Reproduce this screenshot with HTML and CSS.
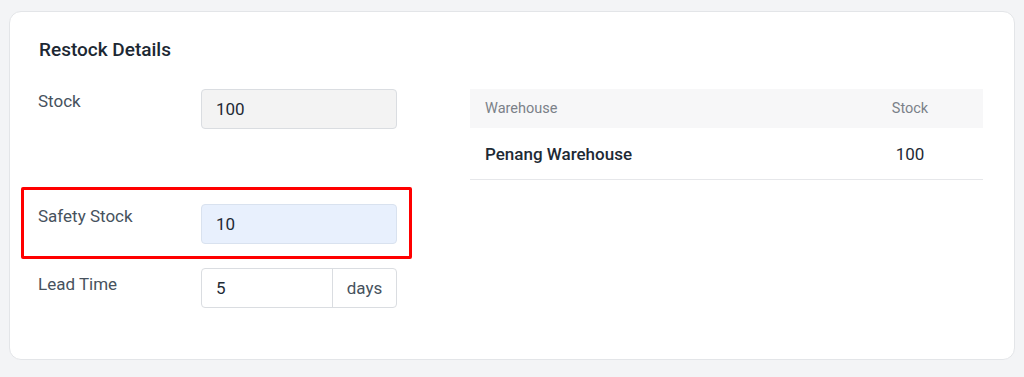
FILE: index.html
```html
<!DOCTYPE html>
<html lang="en">
<head>
    <meta charset="UTF-8">
    <meta name="viewport" content="width=device-width, initial-scale=1.0">
    <title>Restock Details</title>
    <link rel="stylesheet" href="styles.css">
</head>
<body>
    <div class="card">
        <h2 class="card-title">Restock Details</h2>
        <div class="card-body">
            <div class="form-col">
                <div class="form-row row-stock">
                    <label class="form-label">Stock</label>
                    <div class="input readonly">100</div>
                </div>
                <div class="form-row highlighted">
                    <label class="form-label">Safety Stock</label>
                    <div class="input focused">10</div>
                </div>
                <div class="form-row row-lead">
                    <label class="form-label">Lead Time</label>
                    <div class="input-group">
                        <div class="input grouped">5</div>
                        <span class="addon">days</span>
                    </div>
                </div>
            </div>
            <table class="stock-table">
                <thead>
                    <tr>
                        <th class="col-name">Warehouse</th>
                        <th class="col-qty">Stock</th>
                    </tr>
                </thead>
                <tbody>
                    <tr>
                        <td class="col-name">Penang Warehouse</td>
                        <td class="col-qty">100</td>
                    </tr>
                </tbody>
            </table>
        </div>
    </div>
</body>
</html>
```

FILE: styles.css
```css
body {
    font-family: Roboto, "Noto Sans", sans-serif;
    margin: 0;
    padding: 11px 9px 0 9px;
    background: #f3f4f6;
    color: #1e2a35;
}
.card {
    background: #fff;
    border: 1px solid #e3e5e8;
    border-radius: 12px;
    height: 349px;
    box-sizing: border-box;
    padding: 26px 31px 0 11px;
}
.card-title {
    margin: 0 0 27px 18px;
    font-size: 19px;
    font-weight: 500;
    line-height: 24px;
    color: #1c2833;
}
.card-body {
    display: flex;
    gap: 58px;
    align-items: flex-start;
}
.form-col {
    width: 391px;
    display: flex;
    flex-direction: column;
}
.form-row {
    display: flex;
    align-items: flex-start;
    padding: 0 15px 0 17px;
}
.row-stock {
    height: 98px;
}
.form-row.highlighted {
    border: 3px solid #ff0000;
    border-radius: 2px;
    padding: 14px 12px 12px 14px;
    margin-bottom: 9px;
}
.form-label {
    width: 163px;
    flex: none;
    font-size: 17px;
    line-height: 24px;
    color: #47525d;
}
.row-lead .form-label {
    padding-top: 4px;
}
.input {
    width: 196px;
    height: 40px;
    box-sizing: border-box;
    border: 1px solid #dadde1;
    border-radius: 4px;
    padding: 0 14px;
    font-size: 17px;
    line-height: 38px;
    color: #1e2a35;
}
.input.readonly {
    background: #f3f3f3;
}
.input.focused {
    background: #e8f0fd;
    border-color: #d9e2ef;
}
.input-group {
    display: flex;
    width: 196px;
    height: 40px;
    box-sizing: border-box;
    border: 1px solid #dadde1;
    border-radius: 4px;
}
.input.grouped {
    border: none;
    border-right: 1px solid #dadde1;
    border-radius: 0;
    width: 131px;
    height: 38px;
    line-height: 38px;
}
.addon {
    flex: 1;
    text-align: center;
    font-size: 17px;
    line-height: 38px;
    color: #47525d;
}
.stock-table {
    width: 513px;
    border-collapse: collapse;
}
.stock-table th {
    background: #f7f7f8;
    height: 39px;
    font-size: 14.5px;
    font-weight: 400;
    color: #7b8189;
    text-align: left;
    padding: 0 15px;
}
.stock-table td {
    height: 51px;
    font-size: 17px;
    padding: 0 15px;
    border-bottom: 1px solid #e6e7ea;
    color: #1e2a35;
}
.stock-table td.col-name {
    font-weight: 500;
}
.stock-table .col-qty {
    width: 116px;
    text-align: center;
}
```
